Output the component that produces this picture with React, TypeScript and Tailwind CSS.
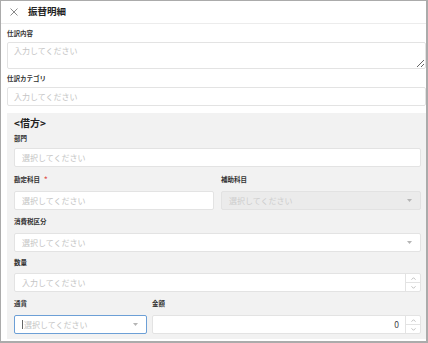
import React from "react";

function Arrow() {
  return (
    <svg width="5" height="3" viewBox="0 0 5 3" className="shrink-0">
      <path d="M0 0H5L2.5 3Z" fill="#b5b5b5" />
    </svg>
  );
}

function Label({ text, h, required }: { text: string; h: string; required?: boolean }) {
  return (
    <div className={`${h} flex items-center`}>
      <span className="text-[6.5px] leading-none font-bold text-[#333]">{text}</span>
      {required && <span className="ml-[4px] text-[7px] leading-none font-bold text-[#e0554f]">*</span>}
    </div>
  );
}

function Select({ disabled, focused, noArrow, className = "" }: { disabled?: boolean; focused?: boolean; noArrow?: boolean; className?: string }) {
  const look = disabled
    ? "bg-[#ebebeb] border-[#e2e2e2]"
    : focused
    ? "bg-white border-[#6c9fd6]"
    : "bg-white border-[#e3e3e3]";
  return (
    <div className={`h-[19px] box-border flex items-center justify-between border rounded-[2px] pl-[7px] pr-[8px] ${look} ${className}`}>
      <div className="flex items-center">
        {focused && <span className="w-px h-[9px] bg-[#666] mr-[1px]" />}
        <span className={`text-[8px] leading-none ${disabled ? "text-[#cdcdcd]" : "text-[#c4c4c4]"}`}>選択してください</span>
      </div>
      {!noArrow && <Arrow />}
    </div>
  );
}

function Spinner() {
  return (
    <div className="w-[15px] border-l border-[#e3e3e3] flex flex-col">
      <div className="flex-1 flex items-center justify-center border-b border-[#e3e3e3]">
        <svg width="5" height="3" viewBox="0 0 5 3">
          <path d="M0.5 2.7L2.5 0.7L4.5 2.7" fill="none" stroke="#b0b0b0" strokeWidth="0.8" />
        </svg>
      </div>
      <div className="flex-1 flex items-center justify-center">
        <svg width="5" height="3" viewBox="0 0 5 3">
          <path d="M0.5 0.3L2.5 2.3L4.5 0.3" fill="none" stroke="#b0b0b0" strokeWidth="0.8" />
        </svg>
      </div>
    </div>
  );
}

function NumberInput({ value, className = "" }: { value?: string; className?: string }) {
  return (
    <div className={`h-[19px] box-border flex border border-[#e3e3e3] rounded-[2px] bg-white ${className}`}>
      <div className={`flex-1 flex items-center pl-[7px] pr-[6px] ${value ? "justify-end" : ""}`}>
        {value ? (
          <span className="text-[8.5px] leading-none text-[#444]">{value}</span>
        ) : (
          <span className="text-[8px] leading-none text-[#c4c4c4]">入力してください</span>
        )}
      </div>
      <Spinner />
    </div>
  );
}

export default function App() {
  return (
    <div className="w-[428px] h-[343px] box-border border-l border-t border-r-2 border-b-2 border-[#ababab] bg-white overflow-hidden font-['Noto_Sans_CJK_JP','Noto_Sans',sans-serif]">
      <div className="h-[23px] box-border border-b border-[#ececec] flex items-center pl-[9px]">
        <svg width="8" height="8" viewBox="0 0 8 8" className="shrink-0">
          <path d="M0.5 0.5L7.5 7.5M7.5 0.5L0.5 7.5" stroke="#8a8a8a" strokeWidth="1" />
        </svg>
        <span className="ml-[10px] text-[9.5px] leading-none font-bold text-[#222]">振替明細</span>
      </div>
      <div className="pl-[6px]">
        <Label text="仕訳内容" h="h-[18px]" />
        <textarea
          className="block w-full h-[27px] box-border border border-[#e3e3e3] rounded-[2px] pl-[6px] pt-[3px] text-[8px] leading-[10px] outline-none placeholder:text-[#c4c4c4]"
          placeholder="入力してください"
        />
        <Label text="仕訳カテゴリ" h="h-[18px]" />
        <div className="h-[19px] box-border flex items-center border border-[#e3e3e3] rounded-[2px] pl-[6px] bg-white">
          <span className="text-[8px] leading-none text-[#c4c4c4]">入力してください</span>
        </div>
        <div className="mt-[7px] bg-[#f2f2f2] pl-[7px] pr-[5px] pb-[5px]">
          <div className="h-[15px] flex items-end">
            <span className="text-[10px] leading-none font-bold text-[#222]">&lt;借方&gt;</span>
          </div>
          <Label text="部門" h="h-[20px]" />
          <Select noArrow />
          <div className="grid grid-cols-2 gap-x-[7px]">
            <div>
              <Label text="勘定科目" h="h-[24px]" required />
              <Select noArrow />
            </div>
            <div>
              <Label text="補助科目" h="h-[24px]" />
              <Select disabled />
            </div>
          </div>
          <Label text="消費税区分" h="h-[23px]" />
          <Select />
          <Label text="数量" h="h-[21px]" />
          <NumberInput />
          <div className="flex gap-[5px]">
            <div className="w-[133px]">
              <Label text="通貨" h="h-[23px]" />
              <Select focused />
            </div>
            <div className="flex-1">
              <Label text="金額" h="h-[23px]" />
              <NumberInput value="0" />
            </div>
          </div>
        </div>
      </div>
    </div>
  );
}
